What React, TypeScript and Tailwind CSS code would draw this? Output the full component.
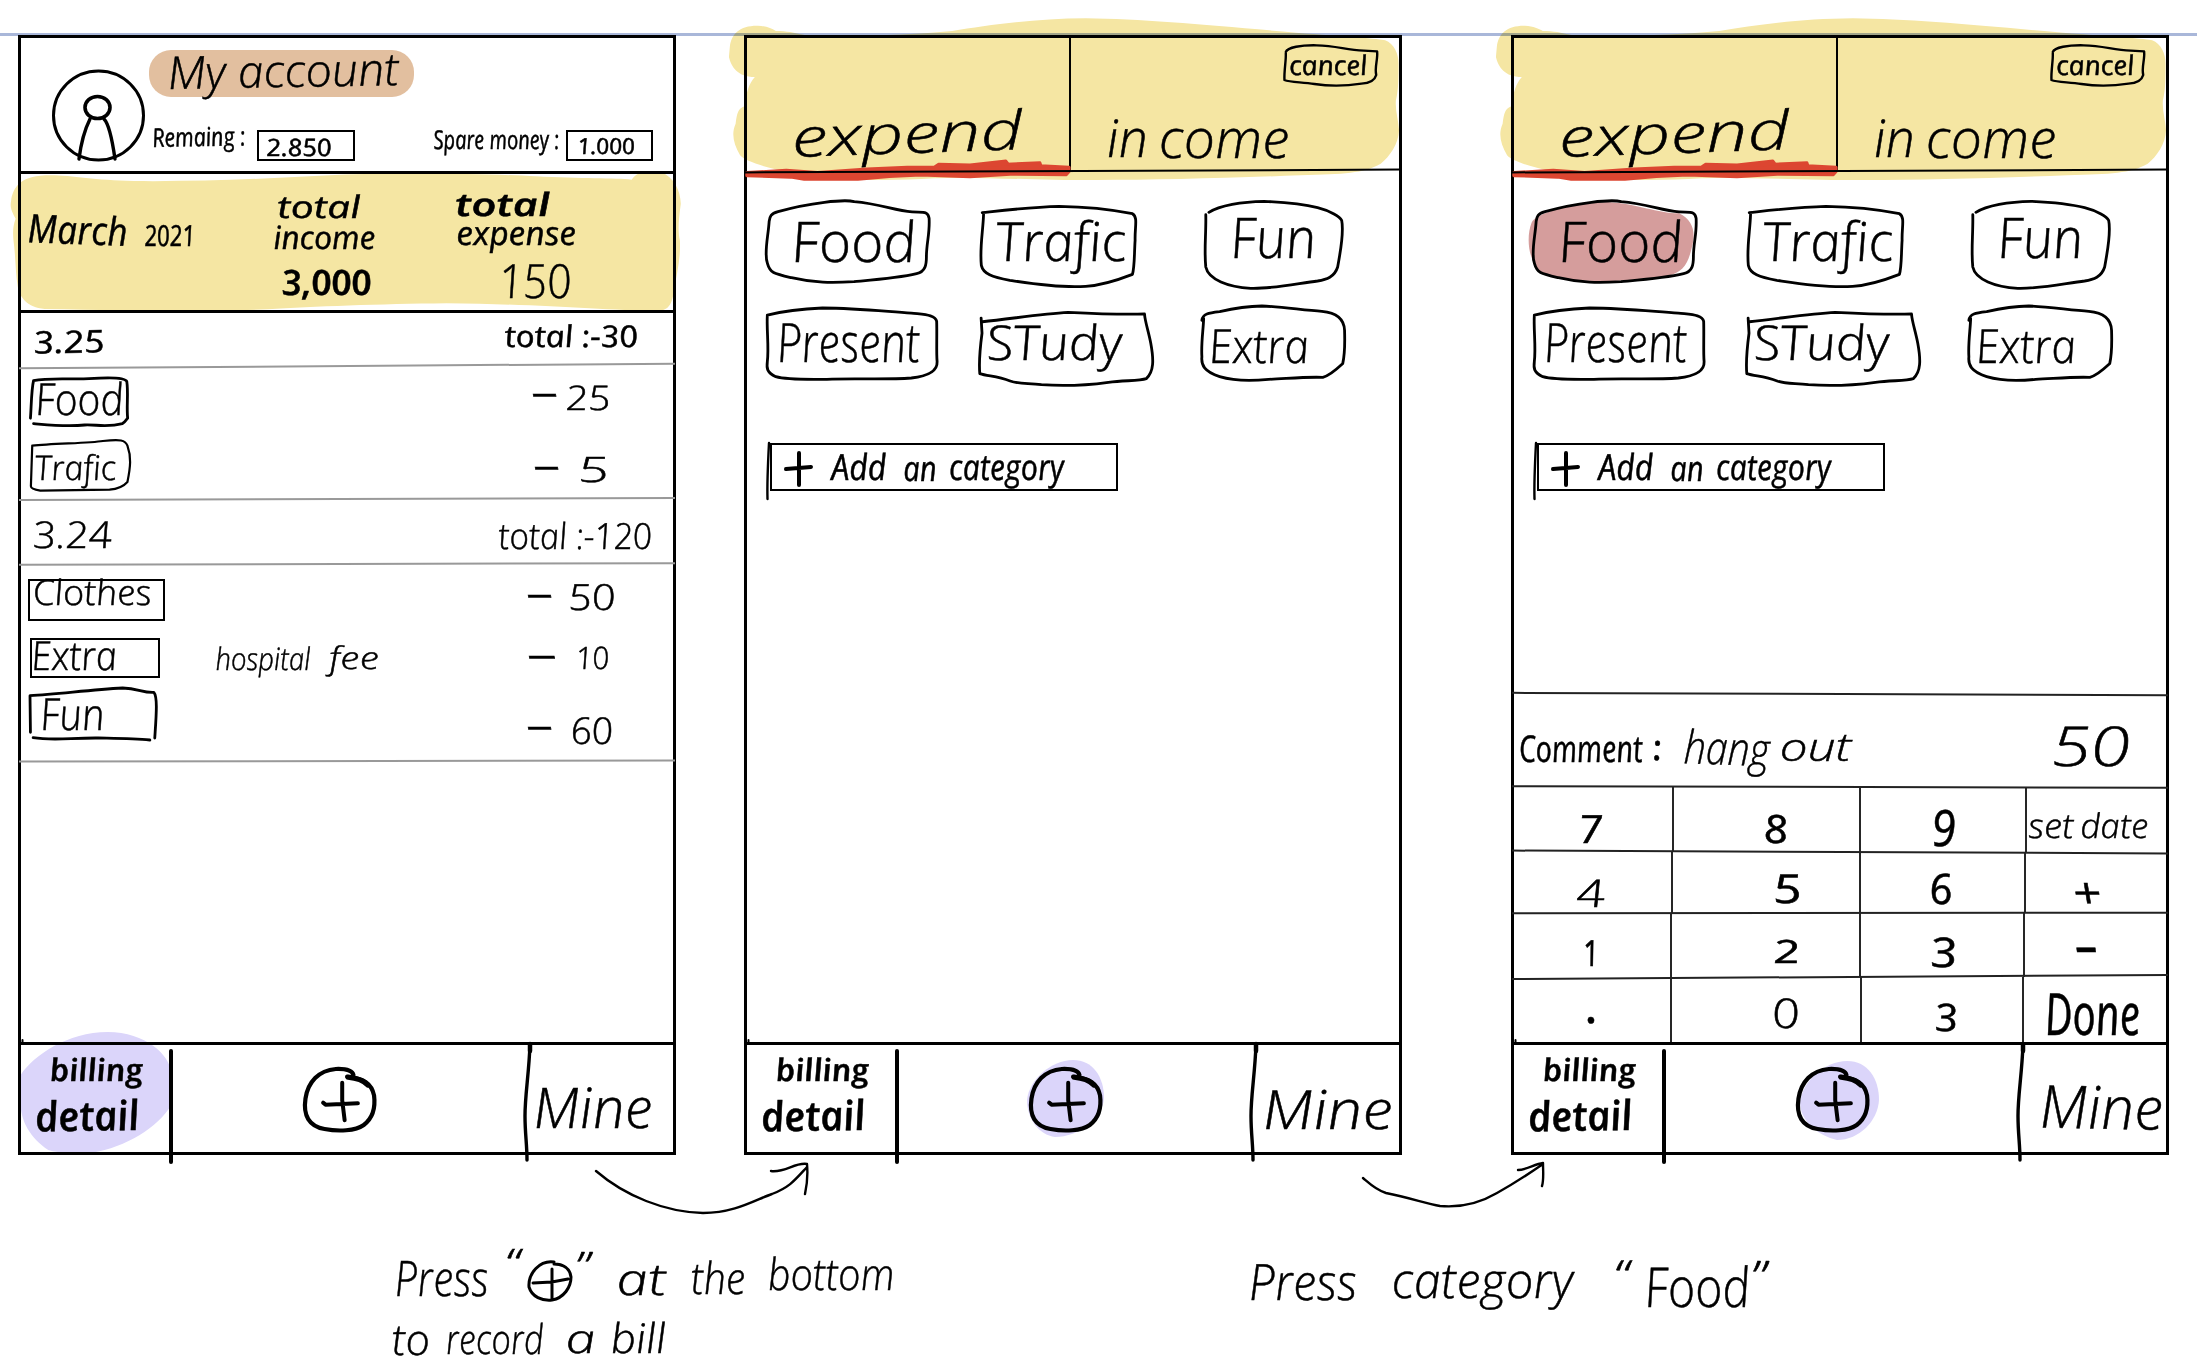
import { useLayoutEffect, useRef } from 'react';
import type { ReactNode } from 'react';

/**
 * A piece of handwriting. The box has no height: its top edge is the baseline,
 * and the lettering is stretched to fill the width of the box.
 */
function Hand({ className, tilt = 0, skew = 8, children }: { className: string; tilt?: number; skew?: number; children: string }) {
  const box = useRef<HTMLSpanElement>(null);
  const text = useRef<HTMLSpanElement>(null);
  useLayoutEffect(() => {
    if (!box.current || !text.current) return;
    const size = parseFloat(getComputedStyle(text.current).fontSize);
    const k = (box.current.clientWidth + size * 0.1) / text.current.offsetWidth;
    text.current.style.transform = `translate(-0.03em, -0.888em) rotate(${tilt}deg) scaleX(${k}) skewX(${skew}deg)`;
  });
  return (
    <span ref={box} className={`block h-0 shrink-0 ${className}`}>
      <span ref={text} className="block w-max origin-[0_0.888em] whitespace-nowrap leading-none">
        {children}
      </span>
    </span>
  );
}

function Outline({ viewBox, d, width = 2.8 }: { viewBox: string; d: string; width?: number }) {
  return (
    <svg className="absolute inset-0 size-full overflow-visible" viewBox={viewBox} preserveAspectRatio="none">
      <path d={d} fill="none" stroke="#000" strokeWidth={width} strokeLinecap="round" strokeLinejoin="round" vectorEffect="non-scaling-stroke" />
    </svg>
  );
}

function Box({ className, shape, children }: { className: string; shape: ReactNode; children: ReactNode }) {
  return (
    <div className={`relative flex shrink-0 items-start ${className}`}>
      {shape}
      {children}
    </div>
  );
}

function PlusCircle({ className }: { className: string }) {
  return (
    <svg className={`overflow-visible ${className}`} viewBox="630 203 147 192" preserveAspectRatio="none" fill="none" stroke="#000" strokeLinecap="round" strokeLinejoin="round">
      <path d="M731 224 C728 208 712 205 695 206 C660 210 638 245 633 295 C628 345 640 378 672 386 C700 394 735 392 752 374 C772 352 776 320 773 285 C768 250 752 234 718 229" strokeWidth="4.2" vectorEffect="non-scaling-stroke" />
      <path d="M708 247 L708 300 L713 360 M669 307 L674 313 L740 309" strokeWidth="4" vectorEffect="non-scaling-stroke" />
      <path d="M720 231 C740 234 752 242 760 254" strokeWidth="5" vectorEffect="non-scaling-stroke" />
    </svg>
  );
}

function Nav({ active, mine }: { active: 'billing' | 'plus2' | 'plus3'; mine: ReactNode }) {
  return (
    <nav className="relative flex h-[110px] shrink-0 items-start">
      <div className="relative flex h-full w-[152px] flex-col">
        {active === 'billing' && (
          <svg className="absolute top-[-12px] left-px h-[121px] w-[151px] mix-blend-multiply" viewBox="42 95 310 362" preserveAspectRatio="none">
            <path d="M44 222 C70 165 140 95 222 95 C300 95 350 165 352 215 L352 315 C325 380 260 440 190 456 C150 459 120 457 100 448 C60 410 40 350 44 300Z" fill="#dbd5fa" />
          </svg>
        )}
        <Hand className="mt-[38px] ml-[33px] w-[90px] text-[31px] font-semibold">billing</Hand>
        <Hand tilt={-1} className="mt-[50px] ml-[19px] w-[100px] text-[41px] font-semibold">detail</Hand>
      </div>
      <div className="relative flex h-full w-[357px] items-start">
        {active === 'plus2' && (
          <svg className="absolute top-[16px] left-[130px] h-[77px] w-[77px]" viewBox="0 0 77 77">
            <path d="M46 0 C66 0 77 17 77 38 C76 58 52 77 28 77 C12 75 0 59 0 40 C2 20 24 0 46 0Z" fill="#dbd5fa" />
          </svg>
        )}
        {active === 'plus3' && (
          <svg className="absolute top-[17px] left-[136px] h-[79px] w-[79px]" viewBox="0 0 77 77">
            <path d="M46 0 C66 0 77 17 77 38 C76 58 58 77 36 77 C18 73 0 59 0 40 C2 20 24 0 46 0Z" fill="#dbd5fa" />
          </svg>
        )}
        <PlusCircle className="relative mt-[24px] ml-[133px] h-[64px] w-[72px]" />
      </div>
      {mine}
      <svg className="pointer-events-none absolute inset-0 size-full overflow-visible" viewBox="0 0 656 110" fill="none" stroke="#000" strokeLinecap="round">
        <path d="M152 7 V118" strokeWidth="4" />
        <path d="M511 0 C510 30 506 50 506 72 C506 90 508 100 508 116" strokeWidth="3.4" />
        <path d="M511 0 V7" strokeWidth="4.5" />
        <path d="M3.5 -4 V0" strokeWidth="2" />
      </svg>
    </nav>
  );
}

function Panel({ className, children }: { className: string; children: ReactNode }) {
  return (
    <section className={`relative flex h-[1118px] w-[656px] shrink-0 flex-col outline-[3px] -outline-offset-2 outline-black ${className}`}>
      {children}
    </section>
  );
}

function ThinRule({ className }: { className: string }) {
  return <div className={`-my-px h-[2px] shrink-0 ${className}`} />;
}

function ThickRule() {
  return <div className="z-10 -mt-[2px] -mb-px h-[3px] shrink-0 bg-black" />;
}

const tagFood = 'M68 354 C70 320 70 270 75 243 C110 233 160 240 200 237 C240 233 280 232 285 245 C289 280 284 320 287 354 L280 365 L275 370 C240 382 215 372 190 374 C150 380 110 374 75 370';
const tagTrafic = 'M72 437 C120 430 200 430 230 423 C270 417 280 420 285 437 C294 470 292 500 285 545 C275 560 262 566 245 568 L90 571 C75 568 69 565 69 558 L72 437';
const tagFun = 'M68 1296 L67 1186 C130 1182 200 1168 275 1163 C310 1164 320 1178 345 1176 C354 1190 350 1250 347 1313 M74 1312 C120 1322 160 1312 220 1313 C260 1314 300 1314 336 1319';

function AccountPanel() {
  return (
    <Panel className="ml-[19px]">
      <header className="flex h-[137px] shrink-0 items-start">
        <svg className="mt-[33px] ml-[32px] size-[94px] shrink-0" viewBox="51 69 94 94" fill="none" stroke="#000" strokeLinecap="round">
          <ellipse cx="98.5" cy="115.5" rx="45" ry="44.5" strokeWidth="3" />
          <ellipse cx="97.5" cy="107.5" rx="12.5" ry="11" strokeWidth="3.6" />
          <path d="M90 119 C85 129 81 143 79 159 M104 119 C110 125 113 145 115 159" strokeWidth="3.4" />
        </svg>
        <div className="flex flex-col">
          <div className="mt-[14px] ml-[4px] flex h-[47px] w-[265px] items-start rounded-[22px] bg-[#e2bf9f]">
            <Hand tilt={-1} skew={4} className="mt-[39px] ml-[21px] w-[227px] text-[45px] font-light">My account</Hand>
          </div>
          <div className="flex items-start">
            <Hand tilt={-1} className="mt-[50px] ml-[9px] w-[91px] text-[26px] font-medium">Remaing :</Hand>
            <div className="mt-[33px] ml-[12px] flex h-[31px] w-[98px] items-start border-2 border-black">
              <Hand className="mt-[24px] ml-[9px] w-[63px] text-[24px] font-medium">2.850</Hand>
            </div>
            <Hand className="mt-[52px] ml-[80px] w-[123px] text-[26px]">Spare money :</Hand>
            <div className="mt-[33px] ml-[8px] flex h-[31px] w-[87px] items-start border-2 border-black">
              <Hand className="mt-[22px] ml-[11px] w-[55px] text-[22px] font-medium">1.000</Hand>
            </div>
          </div>
        </div>
      </header>
      <ThickRule />

      <div className="relative flex h-[139px] shrink-0 items-start">
        <svg className="absolute top-[-6px] left-[-19px] h-[147px] w-[700px] mix-blend-multiply" viewBox="0 500 1568 440" preserveAspectRatio="none">
          <path d="M25 600 C28 570 40 532 90 526 C150 520 200 540 300 542 C450 544 600 535 750 524 C900 516 1100 520 1200 528 C1300 535 1380 533 1415 538 C1425 515 1450 508 1480 515 C1510 530 1524 570 1525 610 C1520 660 1518 690 1523 720 C1525 780 1515 820 1510 870 C1505 910 1500 930 1470 932 C1350 928 1200 910 1000 908 C850 910 700 918 600 926 C450 934 300 930 100 925 C60 920 45 890 40 860 C35 820 35 780 32 740 C28 700 28 680 35 655 C25 630 22 620 25 600Z" fill="#f5e6a3" />
        </svg>
        <Hand tilt={2} skew={4} className="mt-[69px] ml-[10px] w-[96px] text-[39px]">March</Hand>
        <Hand className="mt-[73px] ml-[21px] w-[48px] text-[29px] font-medium">2021</Hand>
        <div className="ml-[81px] flex w-[100px] flex-col">
          <Hand skew={4} className="mt-[46px] ml-[4px] w-[80px] text-[31px] font-medium">total</Hand>
          <Hand skew={4} className="mt-[30px] w-[99px] text-[32px] font-medium">income</Hand>
          <Hand className="mt-[46px] ml-[9px] w-[86px] text-[35px] font-semibold">3,000</Hand>
        </div>
        <div className="ml-[82px] flex w-[120px] flex-col">
          <Hand skew={4} className="mt-[43px] w-[91px] text-[32px] font-semibold">total</Hand>
          <Hand skew={4} className="mt-[29px] ml-px w-[116px] text-[33px] font-medium">expense</Hand>
          <Hand className="mt-[54px] ml-[45px] w-[68px] text-[47px] font-light">150</Hand>
        </div>
      </div>
      <ThickRule />

      <div className="flex h-[54px] shrink-0 items-start">
        <Hand tilt={-1} className="mt-[42px] ml-[17px] w-[68px] text-[31px] font-medium">3.25</Hand>
        <Hand className="mt-[36px] ml-[403px] w-[130px] text-[30px] font-medium">total :-30</Hand>
      </div>
      <ThinRule className="rotate-[-0.4deg] bg-[#999]" />
      <div className="flex h-[67px] shrink-0 items-start">
        <Box className="mt-[12px] ml-[11px] h-[48px] w-[99px]" shape={<Outline viewBox="67 235 223 142" d={tagFood} />}>
          <Hand className="mt-[37px] ml-[8px] w-[84px] text-[44px] font-light">Food</Hand>
        </Box>
        <Hand className="mt-[43px] ml-[405px] w-[24px] text-[36px]">−</Hand>
        <Hand className="mt-[44px] ml-[10px] w-[41px] text-[34px] font-light">25</Hand>
      </div>
      <div className="flex h-[66px] shrink-0 items-start">
        <Box className="mt-[7px] ml-[11px] h-[51px] w-[101px]" shape={<Outline viewBox="67 420 226 152" d={tagTrafic} width={2.2} />}>
          <Hand className="mt-[40px] ml-[7px] w-[78px] text-[34px] font-light">Trafic</Hand>
        </Box>
        <Hand className="mt-[49px] ml-[405px] w-[24px] text-[36px]">−</Hand>
        <Hand className="mt-[49px] ml-[21px] w-[27px] text-[35px] font-light">5</Hand>
      </div>
      <ThinRule className="rotate-[-0.17deg] bg-[#999]" />
      <div className="flex h-[65px] shrink-0 items-start">
        <Hand className="mt-[49px] ml-[16px] w-[75px] text-[37px] font-light">3.24</Hand>
        <Hand className="mt-[51px] ml-[391px] w-[150px] text-[36px] font-light">total :-120</Hand>
      </div>
      <ThinRule className="rotate-[-0.15deg] bg-[#999]" />
      <div className="flex h-[65px] shrink-0 items-start">
        <div className="mt-[15px] ml-[9px] flex h-[42px] w-[137px] shrink-0 items-start border-2 border-black">
          <Hand className="mt-[24px] ml-[5px] w-[115px] text-[35px] font-light">Clothes</Hand>
        </div>
        <Hand className="mt-[46px] ml-[364px] w-[24px] text-[36px]">−</Hand>
        <Hand className="mt-[47px] ml-[18px] w-[44px] text-[36px] font-light">50</Hand>
      </div>
      <div className="flex h-[52px] shrink-0 items-start">
        <div className="mt-[9px] ml-[11px] flex h-[40px] w-[130px] shrink-0 items-start border-2 border-black">
          <Hand className="mt-[31px] ml-[2px] w-[82px] text-[40px] font-light">Extra</Hand>
        </div>
        <Hand skew={4} className="mt-[42px] ml-[57px] w-[92px] text-[31px] font-light">hospital</Hand>
        <Hand skew={4} className="mt-[41px] ml-[22px] w-[46px] text-[31px] font-light">fee</Hand>
        <Hand className="mt-[42px] ml-[153px] w-[27px] text-[36px]">−</Hand>
        <Hand className="mt-[41px] ml-[21px] w-[30px] text-[31px] font-light">10</Hand>
      </div>
      <div className="flex h-[80px] shrink-0 items-start">
        <Box className="mt-[7px] ml-[11px] h-[53px] w-[127px]" shape={<Outline viewBox="67 1163 285 159" d={tagFun} />}>
          <Hand className="mt-[42px] ml-[13px] w-[60px] text-[44px] font-light">Fun</Hand>
        </Box>
        <Hand className="mt-[61px] ml-[372px] w-[24px] text-[36px]">−</Hand>
        <Hand className="mt-[63px] ml-[20px] w-[39px] text-[37px] font-light">60</Hand>
      </div>
      <ThinRule className="rotate-[-0.1deg] bg-[#999]" />
      <div className="flex-1" />
      <ThickRule />
      <Nav active="billing" mine={<Hand skew={4} className="mt-[84px] ml-[8px] w-[114px] text-[56px] font-light">Mine</Hand>} />
    </Panel>
  );
}

const shapes = {
  food: 'M300 605 C280 597 200 608 130 635 C112 642 112 650 110 665 C108 710 98 760 106 790 C112 820 120 822 160 834 C210 850 250 850 300 846 C350 840 400 835 440 822 C460 815 462 795 462 770 C462 730 470 700 468 655 C465 632 455 638 430 636 C390 632 360 612 300 605',
  foodFill: 'M100 668 C110 640 180 612 270 606 C340 612 380 640 430 640 C462 660 468 700 458 745 C450 790 440 820 400 830 C300 850 200 850 130 826 C95 800 85 720 100 668Z',
  trafic: 'M588 637 C650 628 700 620 760 618 C820 619 880 628 925 640 C938 650 930 680 931 720 C929 760 930 800 925 822 C900 835 860 855 820 858 C760 864 690 848 650 840 C610 830 590 820 586 795 C582 740 590 690 591 642',
  fun: 'M1096 636 C1120 615 1170 604 1220 603 C1270 606 1310 612 1340 622 C1370 632 1390 650 1394 660 C1400 700 1390 760 1385 800 C1378 830 1360 838 1340 842 C1300 848 1240 866 1190 864 C1140 860 1095 838 1089 800 C1085 750 1090 700 1089 643',
  present: 'M106 946 C140 935 180 928 230 925 C310 926 370 935 430 940 C460 945 484 945 487 965 C488 1010 486 1060 488 1085 C489 1110 470 1128 430 1134 C370 1140 300 1134 240 1138 C190 1138 150 1140 125 1130 C105 1118 104 1105 106 1085 C110 1040 104 990 106 946',
  study: 'M585 955 L587 1000 C582 1050 580 1090 582 1120 C600 1128 620 1127 650 1142 C670 1152 690 1148 720 1153 C770 1158 820 1155 870 1146 C910 1140 940 1142 955 1135 C972 1115 972 1080 965 1030 C960 995 952 965 951 943 C900 945 840 942 780 938 C720 942 650 958 588 966',
  extra: 'M1080 960 C1082 940 1095 938 1120 934 C1150 925 1180 918 1215 917 C1260 919 1310 930 1350 933 C1385 937 1400 960 1401 990 C1402 1030 1402 1060 1397 1090 C1385 1105 1370 1125 1352 1132 C1310 1130 1270 1136 1230 1138 C1180 1145 1150 1142 1120 1130 C1085 1115 1078 1095 1080 1070 C1078 1030 1083 990 1084 955',
  cancel: 'M1266 156 C1270 142 1300 135 1335 136 C1380 137 1400 150 1440 152 L1470 154 C1472 180 1464 200 1468 225 C1464 245 1450 250 1435 251 C1400 258 1360 258 1330 252 C1300 246 1275 247 1263 240 C1262 210 1267 180 1266 160',
};

function EntryTop({ foodSelected }: { foodSelected: boolean }) {
  return (
    <>
      <header className="relative flex h-[135px] shrink-0 items-start">
        <svg className="absolute top-[-19px] left-[-25px] h-[165px] w-[700px] mix-blend-multiply" viewBox="0 50 1568 495" preserveAspectRatio="none">
          <path d="M22 140 C25 100 45 75 85 76 C105 78 115 84 125 92 C150 92 165 97 190 104 C300 110 430 103 520 92 C600 75 700 55 820 54 C950 56 1100 75 1290 97 C1400 108 1480 115 1490 120 C1510 130 1520 160 1520 190 C1520 230 1520 270 1514 300 C1512 330 1520 360 1521 390 C1520 430 1500 470 1480 490 C1440 520 1400 520 1300 525 C1100 535 900 542 750 538 C650 536 560 530 480 534 C400 540 300 542 230 530 C150 520 60 490 45 465 C30 430 25 400 35 370 C38 340 40 325 55 318 C60 270 65 250 78 230 C40 230 25 200 20 170Z" fill="#f5e6a3" />
        </svg>
        <div className="relative flex h-full w-[326px] items-start border-r-2 border-black">
          <Hand tilt={-2} skew={1} className="mt-[121px] ml-[49px] w-[226px] text-[54px] font-light">expend</Hand>
          <svg className="absolute top-[124px] left-0 h-[20px] w-[325px] overflow-visible" viewBox="58 480 725 56" preserveAspectRatio="none">
            <path d="M62 515 L150 509 L220 515 L330 505 L420 500 L480 500 L490 492 L560 494 L640 483 L643 488 L600 494 L716 488 L718 496 L781 500 L781 512 L775 521 L650 520 L560 527 L450 522 L380 526 L310 534 L190 534 L160 528 L62 524Z" fill="#dc4631" stroke="#dc4631" strokeWidth="3" strokeLinejoin="round" vectorEffect="non-scaling-stroke" />
          </svg>
        </div>
        <div className="relative flex flex-col">
          <Box className="mt-[9px] ml-[213px] h-[41px] w-[94px]" shape={<Outline viewBox="1262 135 210 123" d={shapes.cancel} width={2.4} />}>
            <Hand className="mt-[30px] ml-[7px] w-[76px] text-[27px]">cancel</Hand>
          </Box>
          <div className="flex items-start">
            <Hand skew={3} className="mt-[71px] ml-[38px] w-[36px] text-[52px] font-light">in</Hand>
            <Hand skew={3} className="mt-[72px] ml-[16px] w-[126px] text-[54px] font-light">come</Hand>
          </div>
        </div>
      </header>
      <div className="relative -my-px h-[2px] shrink-0 rotate-[-0.25deg] bg-black" />
      <div className="mt-px flex h-[125px] shrink-0 items-start">
        <Box
          className="mt-[28px] ml-[21px] h-[83px] w-[164px]"
          shape={
            <>
              {foodSelected && (
                <svg className="absolute inset-0 size-full overflow-visible" viewBox="103 600 367 250" preserveAspectRatio="none">
                  <path d={shapes.foodFill} fill="#d59d9c" />
                </svg>
              )}
              <Outline viewBox="103 600 367 250" d={shapes.food} />
            </>
          }
        >
          <Hand className="relative mt-[62px] ml-[29px] w-[119px] text-[56px] font-light">Food</Hand>
        </Box>
        <Box className="mt-[34px] ml-[50px] h-[81px] w-[156px]" shape={<Outline viewBox="583 617 350 243" d={shapes.trafic} />}>
          <Hand className="mt-[55px] ml-[19px] w-[126px] text-[54px] font-light">Trafic</Hand>
        </Box>
        <Box className="mt-[29px] ml-[68px] h-[88px] w-[139px]" shape={<Outline viewBox="1085 602 312 264" d={shapes.fun} />}>
          <Hand className="mt-[57px] ml-[30px] w-[80px] text-[56px] font-light">Fun</Hand>
        </Box>
      </div>
      <div className="flex h-[100px] shrink-0 items-start">
        <Box className="mt-[11px] ml-[21px] h-[72px] w-[172px]" shape={<Outline viewBox="103 925 387 215" d={shapes.present} />}>
          <Hand className="mt-[54px] ml-[14px] w-[138px] text-[54px] font-light">Present</Hand>
        </Box>
        <Box className="mt-[15px] ml-[40px] h-[74px] w-[175px]" shape={<Outline viewBox="578 937 392 220" d={shapes.study} />}>
          <Hand className="mt-[49px] ml-[12px] w-[131px] text-[48px] font-light">STudy</Hand>
        </Box>
        <Box className="mt-[9px] ml-[48px] h-[75px] w-[144px]" shape={<Outline viewBox="1078 917 324 226" d={shapes.extra} />}>
          <Hand className="mt-[58px] ml-[11px] w-[96px] text-[47px] font-light">Extra</Hand>
        </Box>
      </div>
      <div className="relative mt-[46px] ml-[25px] flex h-[48px] w-[348px] shrink-0 items-start border-2 border-black">
        <svg className="absolute top-[-3px] left-[-5px] h-[62px] w-[60px] overflow-visible" viewBox="0 0 60 62" fill="none" stroke="#000" strokeLinecap="round">
          <path d="M2 1 C1 20 0 40 0.500 57" strokeWidth="2.4" />
          <path d="M32 11 V43 M19 27 L44 25" strokeWidth="4" />
        </svg>
        <Hand skew={5} className="mt-[36px] ml-[61px] w-[52px] text-[36px]">Add</Hand>
        <Hand skew={5} className="mt-[36px] ml-[20px] w-[30px] text-[35px]">an</Hand>
        <Hand skew={5} className="mt-[36px] ml-[16px] w-[111px] text-[36px]">category</Hand>
      </div>
    </>
  );
}

function ExpendPanel() {
  return (
    <Panel className="ml-[70px]">
      <EntryTop foodSelected={false} />
      <div className="flex-1" />
      <ThickRule />
      <Nav active="plus2" mine={<Hand skew={4} className="mt-[85px] ml-[11px] w-[126px] text-[54px] font-light">Mine</Hand>} />
    </Panel>
  );
}

function Key({ className = 'border-l-2 border-black/85', children }: { className?: string; children: ReactNode }) {
  return <div className={`flex items-start ${className}`}>{children}</div>;
}

function KeypadPanel() {
  return (
    <Panel className="ml-[111px]">
      <EntryTop foodSelected />
      <div className="flex-1" />
      <ThinRule className="rotate-[0.2deg] bg-[#222]" />
      <div className="flex h-[93px] shrink-0 items-start">
        <Hand className="mt-[68px] ml-[9px] w-[120px] text-[37px]">Comment</Hand>
        <Hand className="mt-[66px] ml-[14px] w-[5px] text-[35px] font-semibold">:</Hand>
        <Hand tilt={2} skew={0} className="mt-[69px] ml-[25px] w-[81px] text-[46px] font-light">hang</Hand>
        <Hand skew={0} className="mt-[67px] ml-[15px] w-[67px] text-[39px] font-light">out</Hand>
        <Hand skew={3} className="mt-[72px] ml-[206px] w-[74px] text-[55px] font-light">50</Hand>
      </div>
      <ThinRule className="rotate-[0.13deg] bg-[#222]" />
      <div className="grid h-[65px] shrink-0 grid-cols-[160px_187px_166px_143px]">
        <Key className="">
          <Hand skew={5} className="mt-[56px] ml-[69px] w-[20px] text-[39px]">7</Hand>
        </Key>
        <Key>
          <Hand className="mt-[56px] ml-[92px] w-[20px] text-[39px]">8</Hand>
        </Key>
        <Key>
          <Hand skew={4} className="mt-[59px] ml-[73px] w-[20px] text-[50px]">9</Hand>
        </Key>
        <Key>
          <Hand skew={4} className="mt-[51px] ml-[3px] w-[42px] text-[34px] font-light">set</Hand>
          <Hand skew={4} className="mt-[51px] ml-[10px] w-[65px] text-[34px] font-light">date</Hand>
        </Key>
      </div>
      <ThinRule className="rotate-[0.25deg] bg-[#222]" />
      <div className="grid h-[61px] shrink-0 grid-cols-[159px_188px_165px_144px]">
        <Key className="">
          <Hand className="mt-[55px] ml-[67px] w-[25px] text-[38px] font-light">4</Hand>
        </Key>
        <Key>
          <Hand className="mt-[52px] ml-[103px] w-[25px] text-[40px]">5</Hand>
        </Key>
        <Key>
          <Hand className="mt-[52px] ml-[71px] w-[19px] text-[42px]">6</Hand>
        </Key>
        <Key>
          <Hand className="mt-[56px] ml-[50px] w-[24px] text-[42px]">+</Hand>
        </Key>
      </div>
      <ThinRule className="rotate-[-0.05deg] bg-[#222]" />
      <div className="grid h-[64px] shrink-0 grid-cols-[158px_189px_164px_145px]">
        <Key className="">
          <Hand skew={11} className="mt-[54px] ml-[74px] w-[12px] text-[36px] font-medium">1</Hand>
        </Key>
        <Key>
          <Hand className="mt-[50px] ml-[104px] w-[24px] text-[32px] font-medium">2</Hand>
        </Key>
        <Key>
          <Hand className="mt-[54px] ml-[72px] w-[24px] text-[41px] font-medium">3</Hand>
        </Key>
        <Key>
          <Hand className="mt-[52px] ml-[53px] w-[18px] text-[40px] font-bold">−</Hand>
        </Key>
      </div>
      <ThinRule className="rotate-[-0.35deg] bg-[#222]" />
      <div className="grid h-[67px] shrink-0 grid-cols-[158px_190px_162px_146px]">
        <Key className="">
          <Hand className="mt-[47px] ml-[77px] w-[6px] text-[40px] font-bold">.</Hand>
        </Key>
        <Key>
          <Hand className="mt-[51px] ml-[103px] w-[24px] text-[41px] font-light">0</Hand>
        </Key>
        <Key>
          <Hand className="mt-[54px] ml-[75px] w-[20px] text-[38px] font-medium">3</Hand>
        </Key>
        <Key>
          <Hand className="mt-[59px] ml-[24px] w-[90px] text-[58px]">Done</Hand>
        </Key>
      </div>
      <ThickRule />
      <Nav active="plus3" mine={<Hand skew={4} tilt={1} className="mt-[84px] ml-[21px] w-[118px] text-[59px] font-light">Mine</Hand>} />
    </Panel>
  );
}

export default function App() {
  return (
    <main className="flex h-[1371px] w-[2197px] flex-col overflow-hidden bg-white font-['Open_Sans','Noto_Sans',sans-serif] text-black italic [-webkit-text-stroke:0.5px_#000]">
      <div className="mt-[33px] h-[3px] shrink-0 bg-[#a9b7d9]" />
      <div className="flex shrink-0 items-start">
        <AccountPanel />
        <ExpendPanel />
        <KeypadPanel />
      </div>
      <div className="flex h-[66px] shrink-0 items-start">
        <svg className="ml-[594px] h-[66px] w-[216px] shrink-0" viewBox="594 1154 216 66" fill="none" stroke="#000" strokeWidth="2.4" strokeLinecap="round" strokeLinejoin="round">
          <path d="M596 1171 C625 1196 665 1212 703 1213 C735 1213 755 1200 772 1194 C790 1187 795 1180 807 1167 M771 1171 C785 1173 795 1162 807 1164 C808 1175 807 1185 805 1194" />
        </svg>
        <svg className="ml-[550px] h-[66px] w-[188px] shrink-0" viewBox="1360 1154 188 66" fill="none" stroke="#000" strokeWidth="2.4" strokeLinecap="round" strokeLinejoin="round">
          <path d="M1363 1178 C1370 1184 1376 1190 1386 1193 C1410 1198 1425 1203 1440 1206 C1462 1208 1480 1203 1497 1193 C1515 1183 1530 1173 1543 1164 M1518 1170 C1526 1170 1535 1164 1543 1163 C1543 1172 1544 1180 1542 1186" />
        </svg>
      </div>
      <div className="flex items-start">
        <div className="flex w-[892px] shrink-0 flex-col">
          <div className="flex h-[95px] items-start">
            <Hand skew={5} className="mt-[77px] ml-[397px] w-[89px] text-[49px] font-light">Press</Hand>
            <Hand className="mt-[56px] ml-[23px] w-[12px] text-[38px] font-light">“</Hand>
            <svg className="mt-[41px] ml-[7px] h-[40px] w-[44px] shrink-0 overflow-visible" viewBox="0 0 44 40" fill="none" stroke="#000" strokeWidth="3" strokeLinecap="round">
              <path d="M26 1 C12 -1 0 12 1 26 C4 36 14 40 24 39 C36 37 43 26 43 16 C42 7 35 3 26 3 M24 8 V38 M5 22 L24 21 L40 18" />
            </svg>
            <Hand className="mt-[59px] ml-[7px] w-[12px] text-[38px] font-light">”</Hand>
            <Hand skew={5} className="mt-[75px] ml-[28px] w-[45px] text-[44px] font-light">at</Hand>
            <Hand skew={5} className="mt-[74px] ml-[29px] w-[51px] text-[44px] font-light">the</Hand>
            <Hand skew={5} className="mt-[70px] ml-[26px] w-[122px] text-[44px] font-light">bottom</Hand>
          </div>
          <div className="flex items-start">
            <Hand skew={5} className="mt-[40px] ml-[394px] w-[34px] text-[43px] font-light">to</Hand>
            <Hand skew={5} className="mt-[39px] ml-[20px] w-[94px] text-[41px] font-light">record</Hand>
            <Hand skew={5} className="mt-[39px] ml-[26px] w-[26px] text-[40px] font-light">a</Hand>
            <Hand skew={5} className="mt-[38px] ml-[19px] w-[51px] text-[41px] font-light">bill</Hand>
          </div>
        </div>
        <Hand skew={4} className="mt-[80px] ml-[359px] w-[103px] text-[50px] font-light">Press</Hand>
        <Hand skew={4} className="mt-[79px] ml-[40px] w-[177px] text-[49px] font-light">category</Hand>
        <Hand className="mt-[70px] ml-[47px] w-[13px] text-[40px] font-light">“</Hand>
        <Hand className="mt-[87px] ml-[17px] w-[100px] text-[55px] font-light">Food</Hand>
        <Hand className="mt-[71px] ml-[7px] w-[12px] text-[42px] font-light">”</Hand>
      </div>
    </main>
  );
}
